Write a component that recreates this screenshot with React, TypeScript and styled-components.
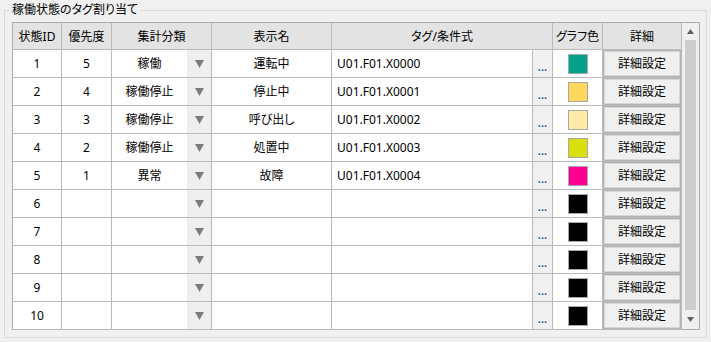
import { Fragment } from "react";
import styled, { createGlobalStyle } from "styled-components";

interface StateRow {
    id: number,
    priority?: number,
    category?: string,
    name?: string,
    tag?: string,
    color: string
}

const rows: StateRow[] = [
    { id: 1, priority: 5, category: "稼働", name: "運転中", tag: "U01.F01.X0000", color: "#03a189" },
    { id: 2, priority: 4, category: "稼働停止", name: "停止中", tag: "U01.F01.X0001", color: "#fcd95c" },
    { id: 3, priority: 3, category: "稼働停止", name: "呼び出し", tag: "U01.F01.X0002", color: "#ffeaa8" },
    { id: 4, priority: 2, category: "稼働停止", name: "処置中", tag: "U01.F01.X0003", color: "#d8e00c" },
    { id: 5, priority: 1, category: "異常", name: "故障", tag: "U01.F01.X0004", color: "#ff0093" },
    { id: 6, color: "#000" },
    { id: 7, color: "#000" },
    { id: 8, color: "#000" },
    { id: 9, color: "#000" },
    { id: 10, color: "#000" },
];

const GlobalStyle = createGlobalStyle`
    body{
        margin: 0;
        background: #f0f0f0;
        font-family: "Noto Sans", "Noto Sans CJK JP", sans-serif;
        font-size: 12px;
        color: #000;
        font-feature-settings: "palt";
    }
`;

const Page = styled.div`
    width: 711px;
    height: 342px;
    padding: 2px 0 0 4px;
    box-sizing: border-box;
`;

const Group = styled.fieldset`
    margin: 0;
    width: 702px;
    height: 336px;
    box-sizing: border-box;
    border: 1px solid #d9d9d9;
    padding: 4px 6px 0 7px;
`;

const Title = styled.legend`
    padding: 0 2px;
    margin-left: -2px;
    line-height: 16px;
`;

const GridBox = styled.div`
    width: 688px;
    height: 308px;
    box-sizing: border-box;
    border: 1px solid #adadad;
    display: flex;
    background: #fff;
`;

const Table = styled.div`
    display: grid;
    grid-template-columns: 49px 50px 75px 25px 120px 201px 20px 50px 79px;
    grid-template-rows: 27px repeat(10, 28px);
`;

const Cell = styled.div<{ $span?: number, $align?: string, $bg?: string, $noRight?: boolean }>`
    grid-column: span ${(p) => p.$span ?? 1};
    box-sizing: border-box;
    border-bottom: 1px solid #bababa;
    border-right: ${(p) => p.$noRight ? "none" : "1px solid #bababa"};
    background: ${(p) => p.$bg ?? "#fff"};
    display: flex;
    align-items: center;
    justify-content: ${(p) => p.$align ?? "center"};
    padding: ${(p) => p.$align === "flex-start" ? "0 0 0 5px" : "0"};
    line-height: 16px;
    white-space: nowrap;
`;

const Head = styled(Cell)`
    background: #e3e3e3;
    padding-top: 1px;
`;

const Dots = styled(Cell)`
    background: #f0f0f0;
    color: #1d5cab;
    font-weight: bold;
    font-size: 11px;
    padding-top: 6px;
`;

const Swatch = styled.div<{ $color: string }>`
    width: 20px;
    height: 20px;
    box-sizing: border-box;
    border: 1px solid #a8a8a8;
    background: ${(p) => p.$color};
`;

const DetailButton = styled.div`
    width: 100%;
    height: 100%;
    box-sizing: border-box;
    border: 1px solid #b3b3b3;
    box-shadow: inset 0 0 0 1px #d6d6d6;
    background: #f0f0f0;
    display: flex;
    align-items: center;
    justify-content: center;
`;

const Scrollbar = styled.div`
    width: 17px;
    background: #f0f0f0;
    display: flex;
    flex-direction: column;
`;

const ArrowBox = styled.div<{ $h: number }>`
    height: ${(p) => p.$h}px;
    display: flex;
    align-items: center;
    justify-content: center;
`;

const Thumb = styled.div`
    height: 270px;
    margin: 0 3px;
    background: #cdcdcd;
`;

const Triangle = ({ w, h, color, up }: { w: number, h: number, color: string, up?: boolean }) => (
    <svg width={w} height={h} viewBox={`0 0 ${w} ${h}`}>
        <polygon points={up ? `0,${h} ${w},${h} ${w / 2},0` : `0,0 ${w},0 ${w / 2},${h}`} fill={color} />
    </svg>
);

function App() {
    return (
        <Page>
            <GlobalStyle />
            <Group>
                <Title>稼働状態のタグ割り当て</Title>
                <GridBox>
                    <Table>
                        <Head>状態ID</Head>
                        <Head>優先度</Head>
                        <Head $span={2}>集計分類</Head>
                        <Head>表示名</Head>
                        <Head $span={2}>タグ/条件式</Head>
                        <Head>グラフ色</Head>
                        <Head>詳細</Head>
                        {rows.map((row) => (
                            <Fragment key={row.id}>
                                <Cell>{row.id}</Cell>
                                <Cell>{row.priority}</Cell>
                                <Cell $noRight>{row.category}</Cell>
                                <Cell $bg="#efefef">
                                    <Triangle w={9} h={8} color="#7c7c7c" />
                                </Cell>
                                <Cell>{row.name}</Cell>
                                <Cell $align="flex-start">{row.tag}</Cell>
                                <Dots>...</Dots>
                                <Cell><Swatch $color={row.color} /></Cell>
                                <Cell><DetailButton>詳細設定</DetailButton></Cell>
                            </Fragment>
                        ))}
                    </Table>
                    <Scrollbar>
                        <ArrowBox $h={17}><Triangle w={7} h={5} color="#606060" up /></ArrowBox>
                        <Thumb />
                        <ArrowBox $h={19}><Triangle w={7} h={5} color="#606060" /></ArrowBox>
                    </Scrollbar>
                </GridBox>
            </Group>
        </Page>
    );
}

export default App;
